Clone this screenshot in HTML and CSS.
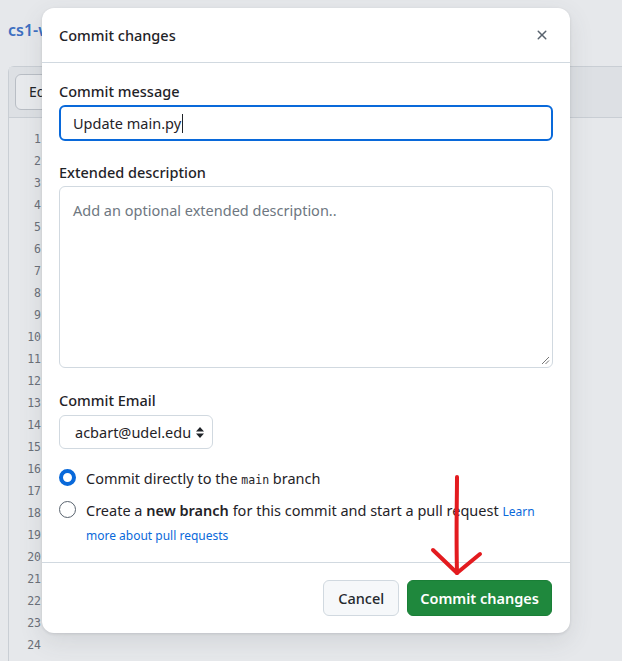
FILE: index.html
```html
<!DOCTYPE html>
<html>
<head>
<meta charset="utf-8">
<link rel="stylesheet" href="styles.css">
</head>
<body>
<div class="page">
  <div class="repo-title">cs1-w</div>
  <div class="editor">
    <div class="editor-head"><span class="edit-btn">Edit</span></div>
    <div class="gutter">
      <span>1</span><span>2</span><span>3</span><span>4</span><span>5</span><span>6</span><span>7</span><span>8</span><span>9</span><span>10</span><span>11</span><span>12</span><span>13</span><span>14</span><span>15</span><span>16</span><span>17</span><span>18</span><span>19</span><span>20</span><span>21</span><span>22</span><span>23</span><span>24</span>
    </div>
  </div>
</div>

<div class="dialog">
  <div class="dialog-head">
    <span class="dialog-title">Commit changes</span>
    <svg class="close" width="16" height="16" viewBox="0 0 16 16"><path d="M3.72 3.72a.75.75 0 0 1 1.06 0L8 6.94l3.22-3.22a.75.75 0 1 1 1.06 1.06L9.06 8l3.22 3.22a.75.75 0 1 1-1.06 1.06L8 9.06l-3.22 3.22a.75.75 0 0 1-1.06-1.06L6.94 8 3.72 4.78a.75.75 0 0 1 0-1.06Z" fill="#59636e"/></svg>
  </div>
  <div class="dialog-body">
    <label class="label">Commit message</label>
    <div class="input focused"><span>Update main.py</span><span class="caret"></span></div>
    <label class="label gap">Extended description</label>
    <div class="textarea"><span class="placeholder">Add an optional extended description..</span>
      <svg class="grip" width="9" height="9" viewBox="0 0 9 9"><path d="M8 1L1 8M8 4.5L4.5 8" stroke="#777" stroke-width="1"/></svg>
    </div>
    <label class="label gap2">Commit Email</label>
    <div class="select">acbart@udel.edu
      <svg width="8" height="11" viewBox="0 0 8 11"><path d="M4 0L8 4.5H0Z M4 11L0 6.5H8Z" fill="#1f2328"/></svg>
    </div>
    <div class="radios">
      <div class="radio-row"><span class="radio on"></span><span>Commit directly to the <code>main</code> branch</span></div>
      <div class="radio-row two"><span class="radio"></span><span class="wrap">Create a <b>new branch</b> for this commit and start a pull request <a>Learn more about pull requests</a></span></div>
    </div>
  </div>
  <div class="dialog-foot">
    <button class="btn">Cancel</button>
    <button class="btn primary">Commit changes</button>
  </div>
</div>

<svg class="annot" width="622" height="661" viewBox="0 0 622 661">
  <path d="M457 477 C 457 500, 456 530, 457 573" stroke="#e31b1f" stroke-width="4" fill="none" stroke-linecap="round"/>
  <path d="M433 550 L 457 573 L 480 554" stroke="#e31b1f" stroke-width="4" fill="none" stroke-linecap="round" stroke-linejoin="round"/>
</svg>
</body>
</html>
```

FILE: styles.css
```css
* { box-sizing: border-box; }
html, body { margin: 0; padding: 0; }
body {
  width: 622px;
  height: 661px;
  overflow: hidden;
  background: #e6e8eb;
  font-family: "Noto Sans", "Open Sans", sans-serif;
  color: #1f2328;
  position: relative;
}
.page { padding: 18px 0 0 8px; }
.repo-title {
  font-size: 16px;
  font-weight: 600;
  color: #3d6fc1;
  line-height: 24px;
}
.editor {
  margin-top: 24px;
  border: 1px solid #c9ced4;
  border-right: none;
  border-radius: 6px 0 0 0;
  height: 600px;
}
.editor-head {
  height: 51px;
  background: #dde0e4;
  border-bottom: 1px solid #c9ced4;
  padding: 7px 6px;
}
.edit-btn {
  display: inline-block;
  height: 36px;
  width: 80px;
  line-height: 34px;
  padding-left: 13px;
  border: 1px solid #b9bec5;
  border-radius: 6px;
  background: #e8eaed;
  font-size: 14px;
}
.gutter {
  display: flex;
  flex-direction: column;
  width: 32px;
  padding-top: 13px;
  font-family: "DejaVu Sans Mono", monospace;
  font-size: 11.5px;
  color: #6b7079;
  text-align: right;
}
.gutter span { height: 22px; line-height: 16px; }

.dialog {
  position: absolute;
  left: 42px;
  top: 8px;
  width: 528px;
  height: 625px;
  background: #fff;
  border-radius: 12px;
  box-shadow: 0 8px 24px rgba(66,74,83,0.12), 0 1px 3px rgba(31,35,40,0.12);
  display: flex;
  flex-direction: column;
}
.dialog-head {
  height: 55px;
  border-bottom: 1px solid #d1d9e0;
  display: flex;
  align-items: center;
  justify-content: space-between;
  padding: 0 20px 0 17px;
}
.dialog-title { font-size: 14.5px; font-weight: 500; }
.close { display: block; }
.dialog-body {
  flex: 1;
  padding: 18px 17px 0 17px;
  display: flex;
  flex-direction: column;
}
.label {
  font-size: 14.5px;
  font-weight: 500;
  line-height: 20px;
  margin-bottom: 4px;
}
.label.gap { margin-top: 21px; }
.label.gap2 { margin-top: 22px; margin-bottom: 5px; }
.input {
  height: 36px;
  border: 2px solid #0969da;
  border-radius: 6px;
  padding: 0 12px;
  display: flex;
  align-items: center;
  font-size: 14.5px;
  color: #1f2328;
}
.caret { width: 1px; height: 19px; background: #1f2328; margin-left: 1px; }
.textarea {
  height: 182px;
  border: 1px solid #d1d9e0;
  border-radius: 6px;
  padding: 13px 13px;
  font-size: 14.5px;
  position: relative;
}
.placeholder { color: #6e7781; }
.grip { position: absolute; right: 2px; bottom: 2px; }
.select {
  align-self: flex-start;
  height: 34px;
  width: 154px;
  border: 1px solid #d1d9e0;
  border-radius: 6px;
  padding: 0 8px 0 15px;
  display: flex;
  align-items: center;
  justify-content: space-between;
  font-size: 14.5px;
}
.radios { margin-top: 17px; display: flex; flex-direction: column; }
.radio-row {
  display: flex;
  align-items: flex-start;
  gap: 10px;
  font-size: 14.5px;
  line-height: 24px;
}
.radio-row.two { margin-top: 8px; }
.radio {
  flex: none;
  width: 17px;
  height: 17px;
  border-radius: 50%;
  border: 1px solid #59636e;
  margin-top: 3px;
  background: #fff;
}
.radio.on { border: 4.5px solid #0969da; }
.wrap { width: 450px; }
code { font-family: "DejaVu Sans Mono", monospace; font-size: 11.5px; line-height: 1; }
b { font-weight: 600; }
a { color: #0969da; font-size: 12px; line-height: 1; }
.dialog-foot {
  border-top: 1px solid #d1d9e0;
  height: 71px;
  padding: 17px 18px 0 0;
  display: flex;
  justify-content: flex-end;
  align-items: flex-start;
  gap: 8px;
}
.btn {
  height: 36px;
  border-radius: 6px;
  border: 1px solid #d1d9e0;
  background: #f6f8fa;
  font-family: inherit;
  font-size: 14.5px;
  font-weight: 500;
  color: #25292e;
  padding: 0 14px;
}
.btn.primary {
  background: #1f883d;
  border-color: #1a7f37;
  color: #fff;
  font-weight: 600;
  padding: 0 12px;
}
.annot { position: absolute; left: 0; top: 0; pointer-events: none; }
```
